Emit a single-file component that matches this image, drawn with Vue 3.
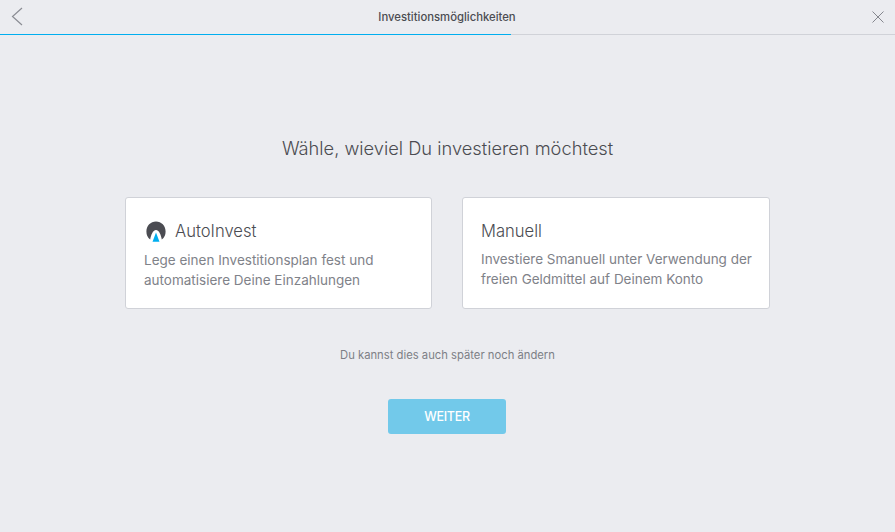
<template>
  <div class="page">
    <header class="topbar">
      <button class="icon-btn back" aria-label="Zurück">
        <svg width="12" height="20" viewBox="0 0 12 20"><path d="M11 1 L1.5 9.5 L11 18" fill="none" stroke="#8b8d94" stroke-width="1.2" /></svg>
      </button>
      <span class="title">Investitionsmöglichkeiten</span>
      <button class="icon-btn close" aria-label="Schließen">
        <svg width="12" height="12" viewBox="0 0 12 12"><path d="M0.5 0.5 L11.5 11.5 M11.5 0.5 L0.5 11.5" fill="none" stroke="#85878e" stroke-width="1" /></svg>
      </button>
    </header>
    <div class="progress"><div class="progress-fill" :style="{ width: progress + 'px' }"></div></div>

    <main class="content">
      <h1>Wähle, wieviel Du investieren möchtest</h1>
      <div class="cards">
        <div v-for="card in cards" :key="card.title" class="card">
          <div class="card-head">
            <svg v-if="card.logo" class="logo" width="20" height="21" viewBox="0 0 20 21">
              <path d="M4.2 18.5 C1.6 16.8 0.4 14 0.4 10.6 C0.4 4.8 4.6 0.6 10 0.6 C15.4 0.6 19.6 4.8 19.6 10.6 C19.6 14 18.4 16.8 15.8 18.5 C15 14.2 13.2 9 10 9 C6.8 9 5 14.2 4.2 18.5 Z" fill="#4b4c52" />
              <path d="M10 11.5 L13.5 20.8 L6.5 20.8 Z" fill="#00aeef" />
            </svg>
            <h2>{{ card.title }}</h2>
          </div>
          <p>{{ card.line1 }}<br />{{ card.line2 }}</p>
        </div>
      </div>
      <p class="hint">Du kannst dies auch später noch ändern</p>
      <button class="next">WEITER</button>
    </main>
  </div>
</template>

<script setup>
const progress = 511

const cards = [
  {
    title: 'AutoInvest',
    logo: true,
    line1: 'Lege einen Investitionsplan fest und',
    line2: 'automatisiere Deine Einzahlungen',
  },
  {
    title: 'Manuell',
    logo: false,
    line1: 'Investiere Smanuell unter Verwendung der',
    line2: 'freien Geldmittel auf Deinem Konto',
  },
]
</script>

<style>
html, body {
  margin: 0;
  background: #ebecf0;
}
</style>

<style scoped>
.page {
  height: 532px;
  background: #ebecf0;
  font-family: Inter, "Liberation Sans", sans-serif;
  overflow: hidden;
}

.topbar {
  height: 34px;
  display: flex;
  align-items: center;
  justify-content: space-between;
  padding: 0 11px;
}

.icon-btn {
  border: 0;
  padding: 0;
  background: none;
  display: flex;
}

.title {
  font-size: 11.3px;
  font-weight: 500;
  color: #4b4c52;
  margin-right: 1px;
}

.progress {
  height: 1px;
  background: #d0d2d8;
}

.progress-fill {
  height: 1px;
  background: #00aeef;
}

.content {
  display: flex;
  flex-direction: column;
  align-items: center;
}

h1 {
  margin: 102px 0 0;
  font-size: 18.25px;
  line-height: 22px;
  font-weight: 300;
  color: #4b4c52;
}

.cards {
  display: flex;
  gap: 30px;
  margin-top: 38px;
}

.card {
  width: 307px;
  height: 112px;
  box-sizing: border-box;
  background: #fff;
  border: 1px solid #d0d2d8;
  border-radius: 3px;
  padding: 21px 10px 0 18px;
}

.card + .card {
  width: 308px;
}

.card-head {
  display: flex;
  align-items: center;
  gap: 9px;
  height: 24px;
}

.logo {
  margin: 1px 0 0 2px;
}

h2 {
  margin: 0;
  font-size: 16.6px;
  font-weight: 300;
  color: #4b4c52;
}

.card p {
  margin: 7px 0 0;
  font-size: 13.5px;
  line-height: 20px;
  color: #808289;
  white-space: nowrap;
}

.card + .card p {
  margin-top: 6px;
}

.hint {
  margin: 39px 0 0;
  font-size: 11.25px;
  line-height: 14px;
  color: #7d7f86;
}

.next {
  margin: 37px 1px 0 0;
  width: 118px;
  height: 35px;
  border: 0;
  border-radius: 3px;
  background: #72c9ea;
  color: #fff;
  font-family: inherit;
  font-size: 12.5px;
  font-weight: 500;
  letter-spacing: -0.3px;
}
</style>
